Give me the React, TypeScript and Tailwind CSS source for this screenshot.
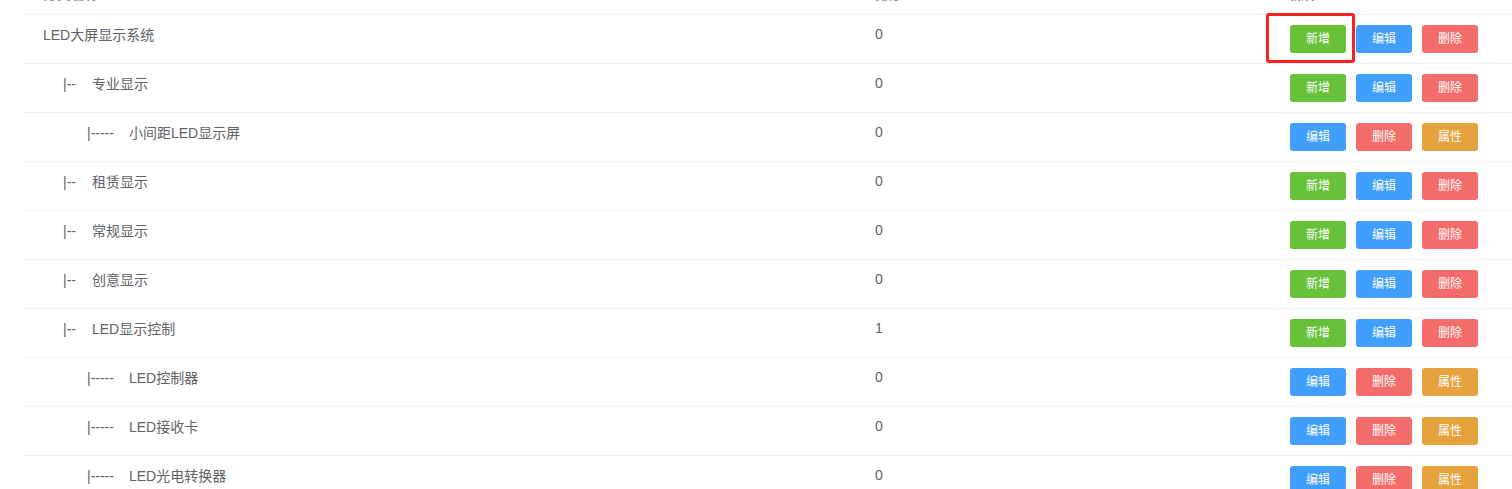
import React from "react";

// Category row shape
interface Category {
  id: number;
  name: string;
  level: number;
  sort: number;
  leaf: boolean;
}

const CATEGORIES: Category[] = [
  { id: 1, name: "LED大屏显示系统", level: 0, sort: 0, leaf: false },
  { id: 2, name: "专业显示", level: 1, sort: 0, leaf: false },
  { id: 3, name: "小间距LED显示屏", level: 2, sort: 0, leaf: true },
  { id: 4, name: "租赁显示", level: 1, sort: 0, leaf: false },
  { id: 5, name: "常规显示", level: 1, sort: 0, leaf: false },
  { id: 6, name: "创意显示", level: 1, sort: 0, leaf: false },
  { id: 7, name: "LED显示控制", level: 1, sort: 1, leaf: false },
  { id: 8, name: "LED控制器", level: 2, sort: 0, leaf: true },
  { id: 9, name: "LED接收卡", level: 2, sort: 0, leaf: true },
  { id: 10, name: "LED光电转换器", level: 2, sort: 0, leaf: true },
];

const FONT = {
  fontFamily: '"Liberation Sans", "Noto Sans CJK SC", sans-serif',
};

function Btn({ label, color }: { label: string; color: string }) {
  return (
    <button
      className={`h-[28px] w-[56px] rounded-[3px] text-[12px] leading-none text-white ${color}`}
    >
      {label}
    </button>
  );
}

function NameCell({ item }: { item: Category }) {
  if (item.level === 0) {
    return <span>{item.name}</span>;
  }
  if (item.level === 1) {
    return (
      <span className="flex">
        <span className="ml-[20px] w-[29px]">|--</span>
        <span>{item.name}</span>
      </span>
    );
  }
  return (
    <span className="flex">
      <span className="ml-[44px] w-[42px]">|-----</span>
      <span>{item.name}</span>
    </span>
  );
}

export default function App() {
  return (
    <div className="relative flow-root min-h-screen bg-white pl-[23px]" style={FONT}>
      <div className="-mt-[30px]">
        {/* Header */}
        <div className="flex h-[45px] border-b border-[#ebeef5] text-[14px] font-bold text-[#909399]">
          <div className="w-[842px] pl-[20px] pt-[13px] leading-[23px]">分类名称</div>
          <div className="w-[415px] pl-[10px] pt-[13px] leading-[23px]">排序</div>
          <div className="flex-1 pl-[10px] pt-[13px] leading-[23px]">操作</div>
        </div>

        {/* Rows */}
        {CATEGORIES.map((item) => (
          <div
            key={item.id}
            className="flex h-[49px] border-b border-[#ebeef5] text-[14px] text-[#606266]"
          >
            <div className="w-[842px] pl-[20px] pt-[9px] leading-[23px]">
              <NameCell item={item} />
            </div>
            <div className="w-[415px] pl-[10px] pt-[8px] leading-[23px]">
              {item.sort}
            </div>
            <div className="flex flex-1 items-start gap-[10px] pl-[10px] pt-[10px]">
              {item.leaf ? (
                <>
                  <Btn label="编辑" color="bg-[#409eff]" />
                  <Btn label="删除" color="bg-[#f56c6c]" />
                  <Btn label="属性" color="bg-[#e6a23c]" />
                </>
              ) : (
                <>
                  <Btn label="新增" color="bg-[#67c23a]" />
                  <Btn label="编辑" color="bg-[#409eff]" />
                  <Btn label="删除" color="bg-[#f56c6c]" />
                </>
              )}
            </div>
          </div>
        ))}
      </div>

      {/* Annotation box over the first add button */}
      <div className="pointer-events-none absolute left-[1266px] top-[13px] h-[50px] w-[89px] rounded-[3px] border-[3px] border-[#ff1e1e]" />
    </div>
  );
}
